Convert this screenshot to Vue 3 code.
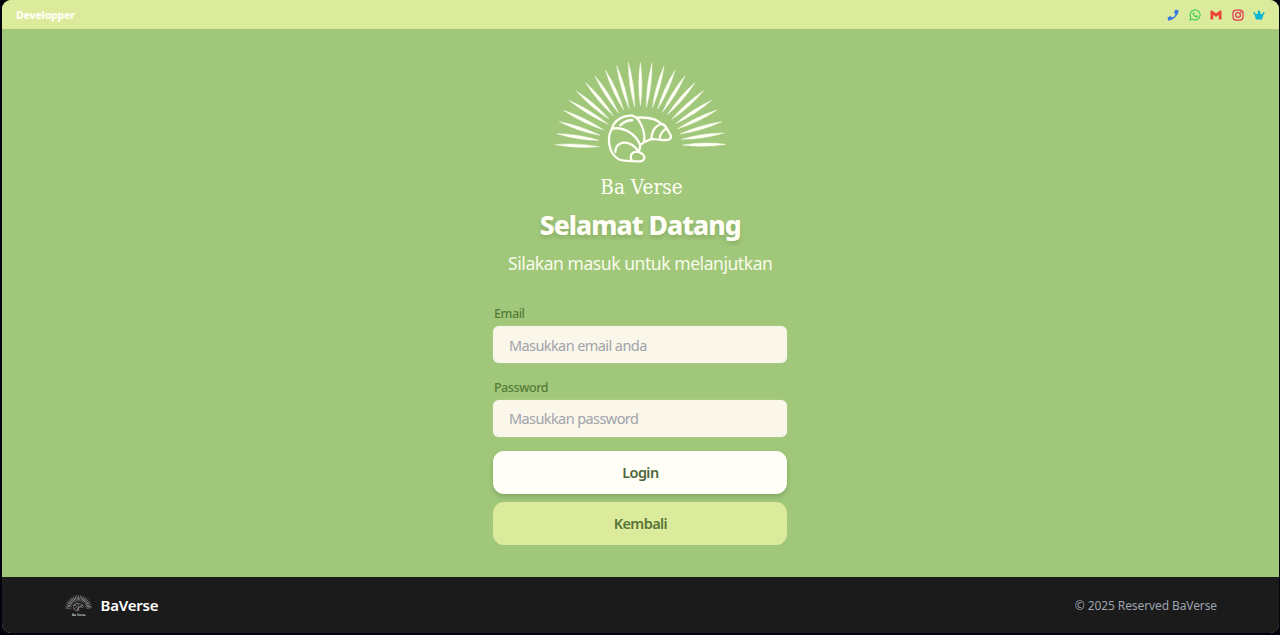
<script setup>
import { h } from 'vue'

// Each ray runs from its outer tip to its inner tip.
const rays = [
  [30, 269, 163, 275], [36, 236, 162, 256], [43, 200, 165, 241], [55, 166, 176, 225],
  [72, 136, 190, 208], [95, 109, 192, 192], [122, 83, 205, 182], [150, 63, 221, 174],
  [181, 45, 236, 165], [215, 32, 252, 160], [250, 22, 269, 157], [286, 22, 286, 153],
  [321, 25, 304, 157], [357, 33, 322, 158], [390, 46, 338, 162], [420, 62, 352, 172],
  [450, 83, 367, 179], [476, 107, 380, 193], [500, 136, 392, 206], [516, 165, 397, 222],
  [530, 200, 405, 237], [537, 234, 410, 253], [543, 268, 412, 270],
]

const rayPath = rays.map(([x1, y1, x2, y2]) => {
  const len = Math.hypot(x2 - x1, y2 - y1)
  const nx = (-(y2 - y1) / len) * 9.5
  const ny = ((x2 - x1) / len) * 9.5
  const mx = x1 + (x2 - x1) * 0.5
  const my = y1 + (y2 - y1) * 0.5
  return `M${x1} ${y1}Q${mx + nx} ${my + ny} ${x2} ${y2}Q${mx - nx} ${my - ny} ${x1} ${y1}Z`
}).join('')

const croissant = [
  'M201 221C186 246 188 293 221 313C236 320 260 317 284 319C296 319 300 310 297 303C291 293 280 289 269 291C257 294 254 306 261 317',
  'M201 221C207 194 238 179 262 182C287 188 302 235 297 261C294 267 289 268 285 269',
  'M201 221C238 214 273 239 285 269C286 279 284 286 279 291',
  'M211 291C211 266 234 258 253 266C268 272 276 281 279 291',
  'M226 211C235 201 246 196 262 195',
  'M275 188C305 186 334 189 349 207C327 213 319 235 319 253C309 254 303 260 296 262',
  'M349 207C362 206 367 226 377 241C381 252 370 256 357 255C341 256 331 250 319 253',
  'M363 221C350 230 343 240 345 254',
].join('')

const BrandMark = () => h('svg', { viewBox: '0 0 570 450', 'aria-label': 'Ba Verse' }, [
  h('path', { d: rayPath, fill: 'currentColor', stroke: 'currentColor', 'stroke-width': 1.2 }),
  h('path', {
    d: croissant, fill: 'none', stroke: 'currentColor', 'stroke-width': 6.8,
    'stroke-linecap': 'round', 'stroke-linejoin': 'round',
  }),
  h('text', {
    x: 166, y: 416, 'font-size': 63, textLength: 247, lengthAdjust: 'spacingAndGlyphs',
    'font-family': '"DejaVu Serif", serif', fill: 'currentColor',
  }, 'Ba Verse'),
])
</script>

<template>
  <div class="screen">
    <div class="window">
      <header class="topbar">
        <span class="dev">Developper</span>
        <nav class="social">
          <svg viewBox="0 0 24 24" fill="#3c78e6"><path d="M17 1l6 1.500c1 9-12 21.500-20.500 20.500L1 17l6-3 3.500 3c3-1 5-3 6.500-6.500L14 7z" /></svg>
          <svg viewBox="0 0 24 24" fill="none" stroke="#45cf62" stroke-width="2.4"><path d="M2 22l1.5-5.4A10 10 0 1 1 7.4 20.5Z" /><path d="M8 7c-2 4 4 11 9 9l.5-2-3-1.4-1.5 1.4c-2-1-3-2-3.6-3.6L10.500 9 9 7z" fill="#45cf62" stroke-width="1" /></svg>
          <svg viewBox="0 0 24 24" fill="#ea4335"><path d="M1 5q0-3 3-2l8 6 8-6q3-1 3 2v16h-5.500V11.500L12 16l-5.500-4.500V21H1z" /></svg>
          <svg viewBox="0 0 24 24" fill="none" stroke="#e23b55" stroke-width="2.500"><rect x="2" y="2" width="20" height="20" rx="6" /><circle cx="12" cy="12" r="4.800" /><circle cx="17.700" cy="6.300" r=".5" /></svg>
          <svg viewBox="0 0 24 24" fill="#06b6d4"><circle cx="12" cy="5.500" r="2.500" /><circle cx="2.500" cy="8" r="1.800" /><circle cx="21.500" cy="8" r="1.800" /><path d="M2 8l6 2.500 4-5 4 5L22 8l-4 13H6z" /></svg>
        </nav>
      </header>

      <main class="content">
        <BrandMark class="logo" />
        <h1>Selamat Datang</h1>
        <p class="lead">Silakan masuk untuk melanjutkan</p>
        <form class="form" @submit.prevent>
          <label for="email">Email</label>
          <input id="email" type="email" placeholder="Masukkan email anda">
          <label for="password">Password</label>
          <input id="password" type="password" placeholder="Masukkan password">
          <button class="login" type="submit">Login</button>
          <button class="back" type="button">Kembali</button>
        </form>
      </main>

      <footer class="footer">
        <div class="brand">
          <BrandMark class="mini" />
          <span>BaVerse</span>
        </div>
        <span class="copy">© 2025 Reserved BaVerse</span>
      </footer>
    </div>
  </div>
</template>

<style>
body { margin: 0; background: #03030d; }
</style>

<style scoped>
.screen {
  box-sizing: border-box;
  height: 635px;
  padding: 0 1px 2px 1.5px;
  background: #03030d;
  font-family: "Noto Sans", "Open Sans", sans-serif;
  overflow: hidden;
}
.window {
  height: 633px;
  display: flex;
  flex-direction: column;
  border-radius: 9px;
  overflow: hidden;
  background: #a1c87a;
}
.topbar {
  box-sizing: border-box;
  height: 29px;
  flex: none;
  display: flex;
  align-items: center;
  justify-content: space-between;
  padding: 0 14px 0 14.5px;
  background: #dceb9b;
}
.dev { color: #fffff5; font-size: 10.5px; font-weight: 800; letter-spacing: -.2px; line-height: 14px; padding-top: 1px; }
.social { display: flex; gap: 9.500px; }
.social svg { width: 12px; height: 12px; }
.content {
  height: 548px;
  flex: none;
  display: flex;
  flex-direction: column;
  align-items: center;
}
.logo { width: 190px; height: 150px; margin-top: 26px; color: #fffff5; flex: none; }
h1 {
  margin: 2px 0 0;
  font-size: 26.5px;
  line-height: 36px;
  font-weight: 800;
  letter-spacing: -.95px;
  color: #fffff8;
  text-shadow: 0 3px 4px rgba(50, 80, 30, .22);
}
.lead { margin: 8px 0 0; font-size: 17.5px; letter-spacing: -.44px; line-height: 24px; color: #f7fbe9; }
.form { width: 294px; margin: 30px 0 0 .3px; display: flex; flex-direction: column; }
label { font-size: 12.5px; letter-spacing: -.4px; line-height: 18px; font-weight: 500; color: #557b38; margin-bottom: 3px; padding-left: .5px; }
input {
  box-sizing: border-box;
  height: 37px;
  margin: 0 0 15.5px;
  padding: 1px 15px 0 15.500px;
  border: 0;
  border-radius: 6px;
  background: #faf6ea;
  font: 14.5px "Noto Sans", sans-serif;
  letter-spacing: -.58px;
  box-shadow: 0 0 1px rgba(255, 255, 255, .6);
}
input::placeholder { color: #a0a3aa; opacity: 1; }
#password { margin-bottom: 14px; padding-top: 0; padding-bottom: 1px; }
button {
  height: 43px;
  padding: 0 0 1px;
  border: 0;
  border-radius: 11px;
  font: 600 14.5px "Noto Sans", sans-serif;
  letter-spacing: -.6px;
}
.login { background: #fffef7; color: #4f663c; box-shadow: 0 3px 5px rgba(50, 80, 30, .25); }
.back { margin-top: 8px; background: #dceb9b; color: #587537; }
.footer {
  flex: 1;
  display: flex;
  align-items: center;
  justify-content: space-between;
  padding: 0 62px 0 61.5px;
  background: #1b1b1b;
}
.brand { display: flex; align-items: center; gap: 6.5px; color: #fff; font-size: 15px; letter-spacing: -.2px; font-weight: 600; }
.mini { width: 31px; height: 25px; color: #d8d8d8; }
.copy { font-size: 12px; letter-spacing: -.1px; color: #9ca3af; }
</style>
